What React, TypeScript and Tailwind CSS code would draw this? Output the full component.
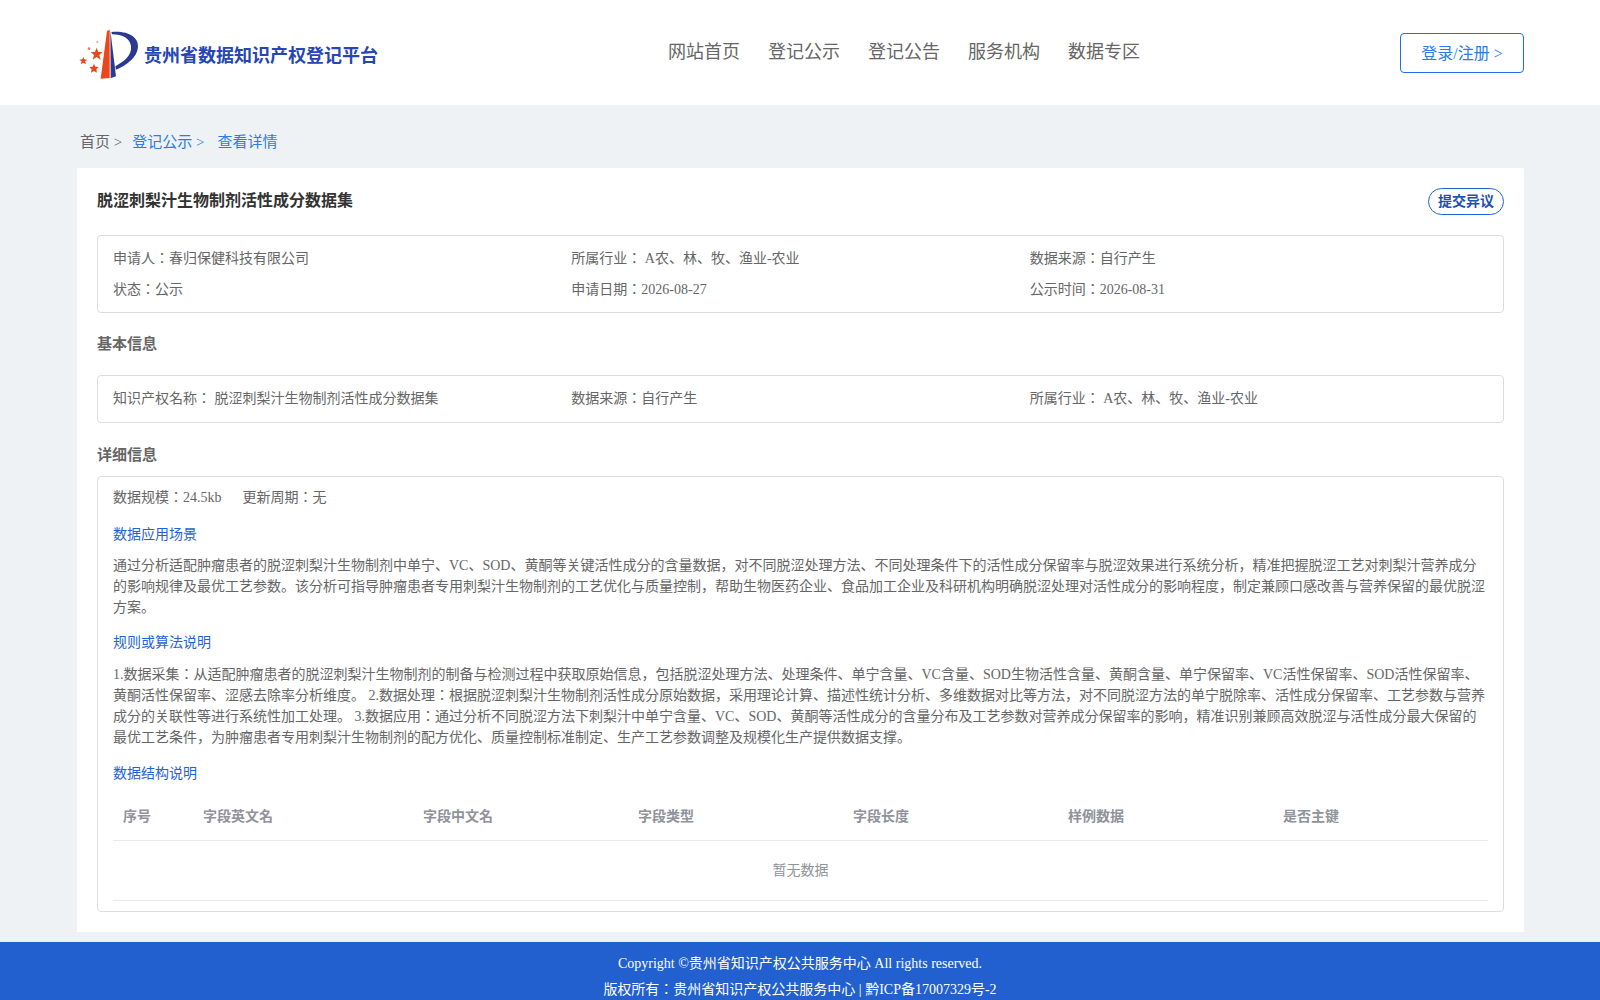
const serif = "font-['Liberation_Serif','Noto_Sans_CJK_JP',serif]"

const navItems = ["网站首页", "登记公示", "登记公告", "服务机构", "数据专区"]
const columns = [
  { title: "序号", width: "w-[80px]" },
  { title: "字段英文名", width: "w-[220px]" },
  { title: "字段中文名", width: "w-[215px]" },
  { title: "字段类型", width: "w-[215px]" },
  { title: "字段长度", width: "w-[215px]" },
  { title: "样例数据", width: "w-[215px]" },
  { title: "是否主键", width: "" },
]

const Logo = () => (
  <svg width="70" height="60" viewBox="0 0 210 180" className="shrink-0">
    <path d="M93 24 L101 20 L101 165 L74 167 Z" fill="#e8481c" />
    <path d="M103 22 L120 160 L104 166 Z" fill="#2b3990" />
    <path d="M106 27 C155 22 188 42 186 72 C184 104 150 128 120 140 L118 130 C145 115 168 98 165 70 C162 46 140 34 108 34 Z" fill="#2b3990" />
    <path d="M62 74 L67 87 L80 87 L70 96 L74 110 L62 102 L50 110 L54 96 L44 87 L57 87 Z" fill="#e8481c" />
    <path d="M22 101 L25 109 L34 110 L27 115 L30 124 L22 119 L14 124 L17 115 L10 110 L19 109 Z" fill="#e8481c" />
    <path d="M54 122 L58 131 L68 132 L61 139 L63 149 L54 144 L45 149 L47 139 L40 132 L50 131 Z" fill="#e8481c" />
    <circle cx="39" cy="77" r="4" fill="#ef7a50" />
    <circle cx="64" cy="57" r="3" fill="#f09a78" />
  </svg>
)

const Section = ({ title, children }: { title: string; children: React.ReactNode }) => (
  <div>
    <div className="text-[14px] leading-[21px] text-[#1f63d6]">{title}</div>
    {children}
  </div>
)

export default function App() {
  return (
    <div className={`h-[1000px] overflow-hidden bg-[#eff2f5] ${serif}`}>
      <header className="flex h-[105px] items-center bg-white pl-[76px] pr-[76px]">
        <div className="flex w-[592px] shrink-0 items-center">
          <Logo />
          <span className="-ml-[2px] mt-[8px] text-[18px] font-bold text-[#2746b4]">贵州省数据知识产权登记平台</span>
        </div>
        <nav className="flex gap-[28px] text-[18px] text-[#666666]">
          {navItems.map((item) => (
            <a key={item}>{item}</a>
          ))}
        </nav>
        <button className="ml-auto h-[40px] w-[124px] rounded border border-[#1f6fe5] pt-[2px] text-[16px] text-[#2b7be8]">登录/注册 &gt;</button>
      </header>

      <main className="pl-[77px] pr-[76px]">
        <div className="flex h-[63px] items-center pl-[3px] pt-[12px] text-[15px]">
          <span className="text-[#666666]">首页 &gt;</span>
          <span className="ml-[10px] text-[#2b7be8]">登记公示 &gt;</span>
          <span className="ml-[13px] text-[#2b7be8]">查看详情</span>
        </div>

        <div className="h-[764px] bg-white px-[20px] pt-[20px]">
          <div className="flex h-[27px] items-center justify-between">
            <h1 className="-mt-[2px] text-[16px] font-bold text-[#333333]">脱涩刺梨汁生物制剂活性成分数据集</h1>
            <button className="h-[27px] w-[76px] rounded-[14px] border border-[#1f63d6] text-[14px] font-bold text-[#1f4fb0]">提交异议</button>
          </div>

          <div className="mt-[20px] grid h-[78px] grid-cols-3 content-center gap-y-[10px] rounded border border-[#dddddd] px-[15px] pb-[1px] text-[14px] leading-[21px] text-[#666666]">
            <div>申请人：春归保健科技有限公司</div>
            <div>所属行业： A农、林、牧、渔业-农业</div>
            <div>数据来源：自行产生</div>
            <div>状态：公示</div>
            <div>申请日期：2026-08-27</div>
            <div>公示时间：2026-08-31</div>
          </div>

          <h2 className="mt-[20px] text-[15px] font-bold leading-[22px] text-[#666666]">基本信息</h2>

          <div className="mt-[20px] grid h-[48px] grid-cols-3 items-center rounded border border-[#dddddd] px-[15px] pb-[1px] text-[14px] text-[#666666]">
            <div>知识产权名称： 脱涩刺梨汁生物制剂活性成分数据集</div>
            <div>数据来源：自行产生</div>
            <div>所属行业： A农、林、牧、渔业-农业</div>
          </div>

          <h2 className="mt-[21px] text-[15px] font-bold leading-[22px] text-[#666666]">详细信息</h2>

          <div className="mt-[10px] h-[436px] rounded border border-[#dddddd] px-[15px] pt-[10px] text-[14px] text-[#666666]">
            <div className="leading-[21px]">
              数据规模：24.5kb<span className="ml-[21px]">更新周期：无</span>
            </div>

            <div className="mt-[16px]">
              <Section title="数据应用场景">
                <p className="mt-[10px] leading-[21px]">
                  通过分析适配肿瘤患者的脱涩刺梨汁生物制剂中单宁、VC、SOD、黄酮等关键活性成分的含量数据，对不同脱涩处理方法、不同处理条件下的活性成分保留率与脱涩效果进行系统分析，精准把握脱涩工艺对刺梨汁营养成分的影响规律及最优工艺参数。该分析可指导肿瘤患者专用刺梨汁生物制剂的工艺优化与质量控制，帮助生物医药企业、食品加工企业及科研机构明确脱涩处理对活性成分的影响程度，制定兼顾口感改善与营养保留的最优脱涩方案。
                </p>
              </Section>
            </div>

            <div className="mt-[14px]">
              <Section title="规则或算法说明">
                <p className="mt-[11px] leading-[21px]">
                  1.数据采集：从适配肿瘤患者的脱涩刺梨汁生物制剂的制备与检测过程中获取原始信息，包括脱涩处理方法、处理条件、单宁含量、VC含量、SOD生物活性含量、黄酮含量、单宁保留率、VC活性保留率、SOD活性保留率、黄酮活性保留率、涩感去除率分析维度。 2.数据处理：根据脱涩刺梨汁生物制剂活性成分原始数据，采用理论计算、描述性统计分析、多维数据对比等方法，对不同脱涩方法的单宁脱除率、活性成分保留率、工艺参数与营养成分的关联性等进行系统性加工处理。 3.数据应用：通过分析不同脱涩方法下刺梨汁中单宁含量、VC、SOD、黄酮等活性成分的含量分布及工艺参数对营养成分保留率的影响，精准识别兼顾高效脱涩与活性成分最大保留的最优工艺条件，为肿瘤患者专用刺梨汁生物制剂的配方优化、质量控制标准制定、生产工艺参数调整及规模化生产提供数据支撑。
                </p>
              </Section>
            </div>

            <div className="mt-[15px]">
              <Section title="数据结构说明">
                <table className="mt-[9px] w-full table-fixed text-left">
                  <thead>
                    <tr className="h-[47px] border-b border-[#e9e9ef] text-[#909399]">
                      {columns.map((col) => (
                        <th key={col.title} className={`px-[10px] font-bold ${col.width}`}>
                          {col.title}
                        </th>
                      ))}
                    </tr>
                  </thead>
                  <tbody>
                    <tr className="h-[60px] border-b border-[#e9e9ef]">
                      <td colSpan={7} className="text-center text-[#909399]">
                        暂无数据
                      </td>
                    </tr>
                  </tbody>
                </table>
              </Section>
            </div>
          </div>
        </div>
      </main>

      <footer className="mt-[10px] h-[58px] bg-[#2160ce] pt-[9px] text-center text-[14px] leading-[26px] text-white">
        <div>Copyright ©贵州省知识产权公共服务中心 All rights reserved.</div>
        <div>版权所有：贵州省知识产权公共服务中心 | 黔ICP备17007329号-2</div>
      </footer>
    </div>
  )
}
